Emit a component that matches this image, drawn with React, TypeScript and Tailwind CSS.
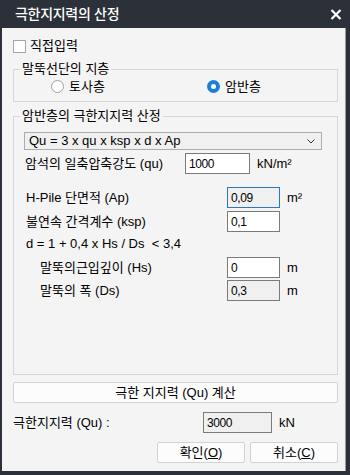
import React, { useState } from 'react';

const FONT = { fontFamily: '"Liberation Sans", "Noto Sans CJK KR", sans-serif' };

const Field: React.FC<{ value: string; width: string; readOnly?: boolean; focused?: boolean }> = ({
  value,
  width,
  readOnly,
  focused,
}) => (
  <div
    className={`${width} h-[21px] flex items-center pl-[3px] text-[12px] tracking-[-0.4px] text-black border ${
      readOnly ? 'bg-[#f0f0f0]' : 'bg-white'
    } ${focused ? 'border-[#2a78c4]' : 'border-[#7a7a7a]'}`}
  >
    {value}
  </div>
);

const Radio: React.FC<{ checked: boolean; label: string }> = ({ checked, label }) => (
  <div className="flex items-center gap-[5px]">
    {checked ? (
      <span className="w-[13px] h-[13px] rounded-full bg-[#1a7fd6] flex items-center justify-center">
        <span className="w-[5px] h-[5px] rounded-full bg-white" />
      </span>
    ) : (
      <span className="w-[13px] h-[13px] rounded-full bg-white border border-[#a2a2a2]" />
    )}
    <span className="text-[13px] text-black leading-none">{label}</span>
  </div>
);

const Group: React.FC<{ title: string; className: string; children: React.ReactNode }> = ({
  title,
  className,
  children,
}) => (
  <fieldset className={`border border-[#d6d6d6] ${className}`}>
    <legend className="ml-[6px] px-[2px] text-[13px] leading-[14px] text-black">{title}</legend>
    {children}
  </fieldset>
);

export default function App() {
  const [rock] = useState(true);

  return (
    <div className="w-[350px] h-[475px] bg-[#2c3038] flex flex-col" style={FONT}>
      {/* title bar */}
      <div className="h-[28px] flex items-center justify-between pl-[15px] pr-[8px] shrink-0">
        <span className="text-white text-[14px] font-medium tracking-[-0.3px]">극한지지력의 산정</span>
        <svg width="12" height="11" viewBox="0 0 12 11">
          <path d="M1.5 1 L10.5 10 M10.5 1 L1.5 10" stroke="white" strokeWidth="2.2" />
        </svg>
      </div>

      {/* body */}
      <div className="flex-1 ml-[2px] mr-[4px] mb-[4px] bg-[#f4f4f4] border-r border-[#9a9a9a] pl-[11px] pr-[8px] pt-[11px] flex flex-col text-[13px] text-black">
        <div className="flex items-center gap-[4px] h-[14px]">
          <span className="w-[13px] h-[13px] bg-white border border-[#a5a5a5]" />
          <span>직접입력</span>
        </div>

        <Group title="말뚝선단의 지층" className="mt-[9px] h-[40px] w-[325px]">
          <div className="flex items-center h-[22px] -mt-[1px]">
            <div className="ml-[37px] w-[156px]">
              <Radio checked={!rock} label="토사층" />
            </div>
            <Radio checked={rock} label="암반층" />
          </div>
        </Group>

        <Group title="암반층의 극한지지력 산정" className="mt-[7px] h-[266px] w-[325px]">
          <div className="flex flex-col pl-[10px]">
            <div className="mt-[9px] w-[298px] h-[18px] border border-[#adadad] bg-[#f0f0f0] flex items-center justify-between pl-[4px] pr-[6px]">
              <span>Qu = 3 x qu x ksp x d x Ap</span>
              <svg width="8" height="5" viewBox="0 0 8 5">
                <path d="M0.5 0.5 L4 4 L7.5 0.5" stroke="#333" strokeWidth="1" fill="none" />
              </svg>
            </div>

            <div className="mt-[3px] flex items-center">
              <span className="w-[161px] pl-[1px]">암석의 일축압축강도 (qu)</span>
              <Field value="1000" width="w-[65px]" />
              <span className="ml-[7px]">kN/m²</span>
            </div>

            <div className="mt-[13px] flex items-center">
              <span className="w-[203px] pl-[2px]">H-Pile 단면적 (Ap)</span>
              <Field value="0,09" width="w-[53px]" readOnly focused />
              <span className="ml-[7px]">m²</span>
            </div>

            <div className="mt-[3px] flex items-center">
              <span className="w-[203px] pl-[2px]">불연속 간격계수 (ksp)</span>
              <Field value="0,1" width="w-[53px]" />
            </div>

            <div className="mt-[2px] h-[20px] flex items-center pl-[2px]">
              d = 1 + 0,4 x Hs / Ds &nbsp;&lt; 3,4
            </div>

            <div className="mt-[3px] flex items-center">
              <span className="w-[203px] pl-[16px]">말뚝의근입깊이 (Hs)</span>
              <Field value="0" width="w-[53px]" />
              <span className="ml-[7px]">m</span>
            </div>

            <div className="mt-[2px] flex items-center">
              <span className="w-[203px] pl-[16px]">말뚝의 폭 (Ds)</span>
              <Field value="0,3" width="w-[53px]" readOnly />
              <span className="ml-[7px]">m</span>
            </div>
          </div>
        </Group>

        <button className="mt-[7px] w-[325px] h-[21px] bg-[#fcfcfc] border border-[#d2d2d2] rounded-[2px]">
          극한 지지력 (Qu) 계산
        </button>

        <div className="mt-[9px] flex items-center">
          <span className="w-[190px]">극한지지력 (Qu) :</span>
          <Field value="3000" width="w-[69px]" readOnly />
          <span className="ml-[7px]">kN</span>
        </div>

        <div className="mt-[9px] flex justify-end gap-[5px] w-[325px]">
          <button className="w-[88px] h-[21px] bg-[#fcfcfc] border border-[#d2d2d2] rounded-[2px]">
            확인(<span className="underline">O</span>)
          </button>
          <button className="w-[88px] h-[21px] bg-[#fcfcfc] border border-[#d2d2d2] rounded-[2px]">
            취소(<span className="underline">C</span>)
          </button>
        </div>
      </div>
    </div>
  );
}
